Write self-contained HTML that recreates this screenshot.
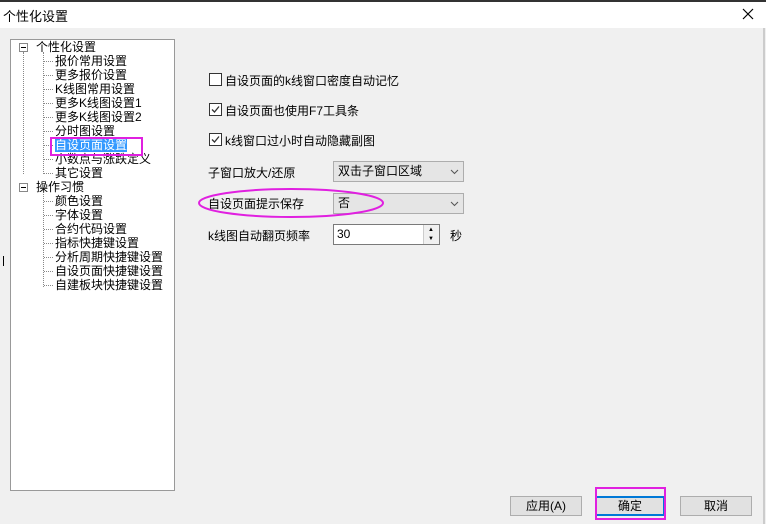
<!DOCTYPE html>
<html><head><meta charset="utf-8"><style>
*{margin:0;padding:0;box-sizing:border-box}
body{width:766px;height:524px;background:#f0f0f0;position:relative;overflow:hidden;font-family:"Liberation Sans","Noto Sans CJK SC","WenQuanYi Zen Hei",sans-serif;font-size:12px;color:#000}
.a{position:absolute;white-space:nowrap}
.title{position:absolute;left:0;top:0;width:766px;height:28px;background:#fff;border-top:2px solid #333}
.panel{position:absolute;left:10px;top:39px;width:165px;height:452px;background:#fff;border:1px solid #999}
.cb{position:absolute;width:13px;height:13px;border:1px solid #333;background:#fff}
.sel{position:absolute;width:131px;height:21px;background:#e5e5e5;border:1px solid #adadad;padding:3px 4px;line-height:13px}
.btn{position:absolute;height:20px;background:#e1e1e1;border:1px solid #adadad;text-align:center;line-height:18px}
.dl{position:absolute;border-left:1px dotted #888}
.dh{position:absolute;border-top:1px dotted #888;width:9px}
</style></head><body>
<div class="title"></div>
<div class="a" style="left:3px;top:6px;font-size:13px">个性化设置</div>
<svg class="a" style="left:742px;top:8px" width="12" height="12"><path d="M1 1L11 11M11 1L1 11" stroke="#000" stroke-width="1.2"/></svg>
<div class="a" style="left:763px;top:28px;width:2px;height:496px;background:#ccc"></div>
<div class="panel"></div>
<div class="dl" style="left:23px;top:52px;height:122px"></div>
<div class="dl" style="left:43px;top:52px;height:122px"></div>
<div class="dl" style="left:43px;top:192px;height:95px"></div>
<div class="dh" style="left:44px;top:61px"></div><div class="dh" style="left:44px;top:75px"></div><div class="dh" style="left:44px;top:89px"></div><div class="dh" style="left:44px;top:103px"></div><div class="dh" style="left:44px;top:117px"></div><div class="dh" style="left:44px;top:131px"></div><div class="dh" style="left:44px;top:145px"></div><div class="dh" style="left:44px;top:159px"></div><div class="dh" style="left:44px;top:173px"></div>
<div class="dh" style="left:44px;top:201px"></div><div class="dh" style="left:44px;top:215px"></div><div class="dh" style="left:44px;top:229px"></div><div class="dh" style="left:44px;top:243px"></div><div class="dh" style="left:44px;top:257px"></div><div class="dh" style="left:44px;top:271px"></div><div class="dh" style="left:44px;top:285px"></div>
<div class="a" style="left:19px;top:43px;width:9px;height:9px;border:1px solid #888;background:#fff"></div>
<div class="a" style="left:21px;top:47px;width:5px;height:1px;background:#000"></div>
<div class="a" style="left:19px;top:183px;width:9px;height:9px;border:1px solid #888;background:#fff"></div>
<div class="a" style="left:21px;top:187px;width:5px;height:1px;background:#000"></div>
<div class="a" style="left:36px;top:40px;line-height:14px">个性化设置<br></div>
<div class="a" style="left:36px;top:180px;line-height:14px">操作习惯</div>
<div class="a" style="left:55px;top:54px;line-height:14px">报价常用设置<br>更多报价设置<br>K线图常用设置<br>更多K线图设置1<br>更多K线图设置2<br>分时图设置<br><span style="background:#3399ff;color:#fff">自设页面设置</span><br>小数点与涨跌定义<br>其它设置</div>
<div class="a" style="left:55px;top:194px;line-height:14px">颜色设置<br>字体设置<br>合约代码设置<br>指标快捷键设置<br>分析周期快捷键设置<br>自设页面快捷键设置<br>自建板块快捷键设置</div>
<div class="a" style="left:50px;top:137px;width:93px;height:19px;border:2px solid #e020e0"></div>
<div class="a" style="left:3px;top:256px;width:1px;height:10px;background:#000"></div>
<div class="cb" style="left:209px;top:73px"></div>
<div class="a" style="left:225px;top:72px">自设页面的k线窗口密度自动记忆</div>
<div class="cb" style="left:209px;top:103px"></div>
<svg class="a" style="left:210px;top:104px" width="11" height="11"><path d="M2 5.5L4.5 8L9 2.5" stroke="#333" stroke-width="1.3" fill="none"/></svg>
<div class="a" style="left:225px;top:102px">自设页面也使用F7工具条</div>
<div class="cb" style="left:209px;top:133px"></div>
<svg class="a" style="left:210px;top:134px" width="11" height="11"><path d="M2 5.5L4.5 8L9 2.5" stroke="#333" stroke-width="1.3" fill="none"/></svg>
<div class="a" style="left:225px;top:132px">k线窗口过小时自动隐藏副图</div>
<div class="a" style="left:208px;top:164px">子窗口放大/还原</div>
<div class="sel" style="left:333px;top:161px">双击子窗口区域</div>
<svg class="a" style="left:450px;top:169px" width="9" height="6"><path d="M1 1L4.5 4.5L8 1" stroke="#555" fill="none"/></svg>
<div class="a" style="left:208px;top:195px">自设页面提示保存</div>
<div class="sel" style="left:333px;top:193px">否</div>
<svg class="a" style="left:450px;top:201px" width="9" height="6"><path d="M1 1L4.5 4.5L8 1" stroke="#555" fill="none"/></svg>
<svg class="a" style="left:196px;top:186px" width="192" height="34"><ellipse cx="95" cy="17" rx="92" ry="14" stroke="#e020e0" stroke-width="2" fill="none"/></svg>
<div class="a" style="left:208px;top:227px">k线图自动翻页频率</div>
<div class="a" style="left:333px;top:224px;width:107px;height:21px;background:#fff;border:1px solid #7a7a7a;padding:2px 3px">30</div>
<div class="a" style="left:423px;top:225px;width:16px;height:19px;background:#f0f0f0;border-left:1px solid #ccc"></div>
<div class="a" style="left:428px;top:227px;font-size:6px">▲</div>
<div class="a" style="left:428px;top:236px;font-size:6px">▼</div>
<div class="a" style="left:450px;top:227px">秒</div>
<div class="btn" style="left:510px;top:496px;width:72px">应用(A)</div>
<div class="btn" style="left:595px;top:496px;width:70px;border:2px solid #0078d7;line-height:16px">确定</div>
<div class="a" style="left:595px;top:487px;width:71px;height:33px;border:2px solid #e020e0"></div>
<div class="btn" style="left:680px;top:496px;width:72px">取消</div>
</body></html>
